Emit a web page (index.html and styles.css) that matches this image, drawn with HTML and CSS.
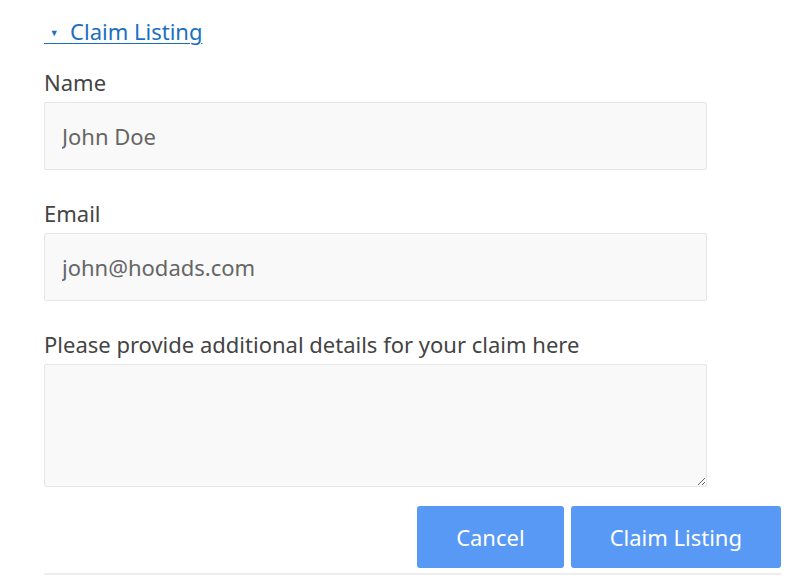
FILE: index.html
```html
<!DOCTYPE html>
<html lang="en">
<head>
    <meta charset="UTF-8">
    <meta name="viewport" content="width=device-width, initial-scale=1.0">
    <title>Claim Listing</title>
    <link rel="stylesheet" href="styles.css">
</head>
<body>
    <div class="container">
        <details class="claim" open>
            <summary>&nbsp;<span class="arrow">&#9660;</span>&nbsp;&nbsp;Claim Listing</summary>
            <form class="claim-form">
                <div class="field">
                    <label for="name">Name</label>
                    <input type="text" id="name" placeholder="John Doe">
                </div>
                <div class="field">
                    <label for="email">Email</label>
                    <input type="email" id="email" placeholder="john@hodads.com">
                </div>
                <div class="field field-last">
                    <label for="details">Please provide additional details for your claim here</label>
                    <textarea id="details"></textarea>
                </div>
                <div class="actions">
                    <button type="button">Cancel</button>
                    <button type="submit">Claim Listing</button>
                </div>
            </form>
        </details>
    </div>
</body>
</html>
```

FILE: styles.css
```css
body {
    font-family: "Noto Sans", "Open Sans", sans-serif;
    background-color: #fff;
    margin: 0;
    padding: 0;
}
.container {
    width: 737px;
    padding: 17px 0 0 44px;
}
summary {
    list-style: none;
    display: inline-block;
    font-size: 22px;
    line-height: 28px;
    color: #1a6fbf;
    text-decoration: underline;
    text-underline-offset: 3px;
    text-decoration-thickness: 1px;
    cursor: pointer;
}
summary::-webkit-details-marker {
    display: none;
}
.arrow {
    font-size: 9px;
    vertical-align: 4px;
}
.claim-form {
    margin-top: 21px;
    border-bottom: 2px solid #eee;
    padding-bottom: 5px;
}
.field {
    margin-bottom: 29px;
}
.field-last {
    margin-bottom: 19px;
}
label {
    display: block;
    font-size: 22px;
    line-height: 28px;
    color: #444;
    margin-bottom: 6px;
}
input, textarea {
    display: block;
    width: 663px;
    box-sizing: border-box;
    height: 68px;
    padding: 0 17px;
    font-family: inherit;
    font-size: 22px;
    color: #666;
    background-color: #f9f9f9;
    border: 1px solid #e6e6e6;
    border-radius: 2px;
    outline: none;
}
input::placeholder {
    color: #666;
}
textarea {
    height: 123px;
    padding: 12px 17px;
    resize: vertical;
}
.actions {
    display: flex;
    justify-content: flex-end;
    gap: 7px;
}
button {
    height: 62px;
    padding: 0 39px;
    font-family: inherit;
    font-size: 22px;
    color: #fff;
    background-color: #5899f5;
    border: none;
    border-radius: 3px;
    cursor: pointer;
}
button:hover {
    background-color: #3f86ee;
}
```
